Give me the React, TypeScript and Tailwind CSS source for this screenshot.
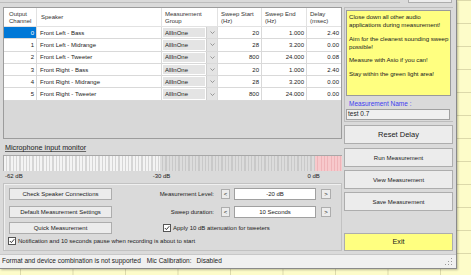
const rows = [
  { ch: 0, sp: "Front Left - Bass", start: "20", end: "1.000", delay: "2.40" },
  { ch: 1, sp: "Front Left - Midrange", start: "28", end: "3.200", delay: "0.00" },
  { ch: 2, sp: "Front Left - Tweeter", start: "800", end: "24.000", delay: "0.08" },
  { ch: 3, sp: "Front Right - Bass", start: "20", end: "1.000", delay: "2.40" },
  { ch: 4, sp: "Front Right - Midrange", start: "28", end: "3.200", delay: "0.00" },
  { ch: 5, sp: "Front Right - Tweeter", start: "800", end: "24.000", delay: "0.00" },
];

function Btn({ children, className = "" }: { children: React.ReactNode; className?: string }) {
  return (
    <div className={"flex items-center justify-center border border-[#adadad] bg-[#ececec] text-[#1a1a1a] " + className}>
      {children}
    </div>
  );
}

function Check({ label }: { label: string }) {
  return (
    <div className="flex items-center gap-[2px]">
      <div className="flex h-[8px] w-[8px] items-center justify-center border border-[#555] bg-white">
        <svg width="6" height="6" viewBox="0 0 6 6">
          <path d="M0.8 3 L2.4 4.6 L5.3 1.2" fill="none" stroke="#222" strokeWidth="0.9" />
        </svg>
      </div>
      <span className="text-[6px] leading-none text-[#222]">{label}</span>
    </div>
  );
}

function Table() {
  return (
    <div className="flex h-[132px] flex-col border border-[#9c9c9c] bg-[#d8d8d8]">
      <div className="flex h-[19px] bg-white text-[6px] leading-[6.5px] text-[#333]">
        <div className="w-[33px] border-r border-b border-[#e2e2e2] px-[5px] pt-[3px]">Output<br />Channel</div>
        <div className="w-[125px] border-r border-b border-[#e2e2e2] px-[4px] pt-[6px]">Speaker</div>
        <div className="w-[56px] border-r border-b border-[#e2e2e2] px-[3px] pt-[3px]">Measurement<br />Group</div>
        <div className="w-[44px] border-r border-b border-[#e2e2e2] px-[3px] pt-[3px]">Sweep Start<br />(Hz)</div>
        <div className="w-[45px] border-r border-b border-[#e2e2e2] px-[3px] pt-[3px]">Sweep End<br />(Hz)</div>
        <div className="w-[34px] border-b border-[#e2e2e2] px-[3px] pt-[3px]">Delay<br />(msec)</div>
      </div>
      {rows.map((r) => (
        <div key={r.ch} className="flex h-[12.3px] bg-white text-[6px] leading-none text-[#222]">
          <div
            className={
              "flex w-[33px] items-center justify-end border-r border-b border-[#d9d9d9] pr-[2px] " +
              (r.ch === 0 ? "bg-[#0078d7] text-white" : "")
            }
          >
            {r.ch}
          </div>
          <div className="flex w-[125px] items-center border-r border-b border-[#d9d9d9] pl-[3px]">{r.sp}</div>
          <div className="flex w-[56px] border-r border-b border-[#d9d9d9] bg-[#e4e4e4]">
            <div className="flex flex-1 items-center border border-white pl-[2px]">AllInOne</div>
            <div className="flex w-[11px] items-center justify-center border-l border-[#cfcfcf]">
              <svg width="5" height="3" viewBox="0 0 5 3">
                <path d="M0.5 0.5 L2.5 2.5 L4.5 0.5" fill="none" stroke="#777" strokeWidth="0.7" />
              </svg>
            </div>
          </div>
          <div className="flex w-[44px] items-center justify-end border-r border-b border-[#d9d9d9] pr-[2px]">{r.start}</div>
          <div className="flex w-[45px] items-center justify-end border-r border-b border-[#d9d9d9] pr-[2px]">{r.end}</div>
          <div className="flex w-[34px] items-center justify-end border-b border-[#d9d9d9] pr-[2px]">{r.delay}</div>
        </div>
      ))}
    </div>
  );
}

function Meter() {
  return (
    <div className="mt-[3px] flex h-[16px] border-t border-l border-[#a8a8a8] bg-[#e8e8e8]">
      <div className="w-[156px] bg-[repeating-linear-gradient(90deg,#f4f4f4_0px,#f4f4f4_2px,#d6d6d6_2px,#d6d6d6_3.3px)]" />
      <div className="w-[155px] bg-[repeating-linear-gradient(90deg,#dcdcdc_0px,#dcdcdc_2px,#c9c9c9_2px,#c9c9c9_3.3px)]" />
      <div className="flex-1 bg-[repeating-linear-gradient(90deg,#f7c9cc_0px,#f7c9cc_2.3px,#efb4b8_2.3px,#efb4b8_3.3px)]" />
    </div>
  );
}

function Stepper({ label, value }: { label: string; value: string }) {
  return (
    <div className="flex h-[12px] items-center">
      <div className="w-[66px] pr-[2px] text-right text-[6px] leading-none text-[#222]">{label}</div>
      <Btn className="ml-[5px] h-[10px] w-[9px] text-[6px] leading-none">&lt;</Btn>
      <div className="ml-[4px] flex h-[12px] w-[82px] items-center justify-center border border-[#a0a0a0] bg-white text-[6px] leading-none text-[#222]">
        {value}
      </div>
      <Btn className="ml-[5px] h-[10px] w-[10px] text-[6px] leading-none">&gt;</Btn>
    </div>
  );
}

export default function App() {
  return (
    <div className="h-[275px] w-[471px] overflow-hidden bg-[#fdfcc9] bg-[linear-gradient(#dcd9aa_1px,transparent_1px),linear-gradient(90deg,#dcd9aa_1px,transparent_1px)] bg-[size:52.5px_23px] bg-[position:20px_0px] font-['Liberation_Sans',Arial,sans-serif]">
      <div className="flex h-[269px] w-[457px] flex-col border-r border-b border-[#8a8a8a] bg-[#dadada] shadow-[1px_1px_2px_rgba(0,0,0,0.25)]">
        {/* top strip */}
        <div className="flex h-[6px]">
          <div className="mt-[1px] h-[2px] w-[400px] border-b border-[#bdbdbd]" />
          <div className="ml-[8px] h-[3px] w-[44px] border-r border-b border-l border-[#adadad] bg-[#ececec]" />
        </div>

        <div className="flex flex-1">
          {/* left column */}
          <div className="ml-[3px] flex w-[339px] flex-col pt-[1px]">
            <Table />
            <div className="mt-[4px] h-[9px] pl-[2px] text-[7.2px] leading-[9px] text-[#222] underline decoration-[#666]">
              Microphone input monitor
            </div>
            <Meter />
            <div className="flex h-[9px] items-center text-[6px] leading-none text-[#222]">
              <span className="ml-[2px]">-62 dB</span>
              <span className="ml-[130px]">-30 dB</span>
              <span className="ml-[137px]">0 dB</span>
            </div>
            <div className="mt-[3px] flex h-[68px] flex-col border border-[#c2c2c2] shadow-[inset_1px_1px_0_#f0f0f0]">
              <div className="flex">
                <div className="ml-[5px] mt-[4px] flex w-[103px] flex-col text-[6px] leading-none">
                  <Btn className="h-[12px]">Check Speaker Connections</Btn>
                  <Btn className="mt-[6px] h-[12px]">Default Measurement Settings</Btn>
                  <Btn className="mt-[4px] h-[12px]">Quick Measurement</Btn>
                </div>
                <div className="ml-[38px] mt-[4px] flex flex-col">
                  <Stepper label="Measurement Level:" value="-20 dB" />
                  <div className="mt-[6px]">
                    <Stepper label="Sweep duration:" value="10 Seconds" />
                  </div>
                  <div className="ml-[13px] mt-[6px]">
                    <Check label="Apply 10 dB attenuation for tweeters" />
                  </div>
                </div>
              </div>
              <div className="ml-[4px] mt-[3px]">
                <Check label="Notification and 10 seconds pause when recording is about to start" />
              </div>
            </div>
          </div>

          {/* right column */}
          <div className="ml-[2px] flex w-[109px] flex-col pt-[1px]">
            <div className="flex h-[115px] flex-col border-l border-t border-b border-[#bdbdbd] pl-[1px] pt-[2px]">
              <div className="h-[86px] w-[105px] border border-[#9a9a9a] bg-[#ffff80] pl-[2px] pr-0 pt-[2px] text-[6.2px] leading-[8px] tracking-[-0.05px] text-[#222]">
                <p>Close down all other audio applications during measurement!</p>
                <p className="mt-[5.5px]">Aim for the cleanest sounding sweep possible!</p>
                <p className="mt-[5.5px]">Measure with Asio if you can!</p>
                <p className="mt-[5.5px]">Stay within the green light area!</p>
              </div>
              <div className="mt-[4px] pl-[3px] text-[6.5px] leading-[7px] text-[#3c3cf0]">Measurement Name :</div>
              <div className="mt-[2px] flex h-[11px] w-[104px] items-center border border-[#a0a0a0] bg-[#f0f0f0] pl-[1px] text-[6.5px] leading-none text-[#222]">
                test 0.7
              </div>
            </div>
            <Btn className="mt-[3px] h-[19px] text-[7.5px] leading-none">Reset Delay</Btn>
            <Btn className="mt-[4px] h-[19px] text-[6px] leading-none">Run Measurement</Btn>
            <Btn className="mt-[3px] h-[19px] text-[6px] leading-none">View Measurement</Btn>
            <Btn className="mt-[3px] h-[19px] text-[6px] leading-none">Save Measurement</Btn>
            <Btn className="mt-[22px] h-[18px] bg-[#ffff80] text-[7.2px] leading-none">Exit</Btn>
          </div>
        </div>

        {/* status bar */}
        <div className="relative flex h-[14px] items-center border-t border-[#c8c8c8] bg-[#f0f0f0] pl-[2px] text-[6.5px] leading-none text-[#222]">
          <span>Format and device combination is not supported</span>
          <span className="ml-[6px]">Mic Calibration:</span>
          <span className="ml-[5px]">Disabled</span>
          <svg className="absolute right-[3px] bottom-[2px]" width="8" height="8" viewBox="0 0 8 8">
            <rect x="6" y="0" width="1" height="1" fill="#999" />
            <rect x="6" y="3" width="1" height="1" fill="#999" />
            <rect x="3" y="3" width="1" height="1" fill="#999" />
            <rect x="6" y="6" width="1" height="1" fill="#999" />
            <rect x="3" y="6" width="1" height="1" fill="#999" />
            <rect x="0" y="6" width="1" height="1" fill="#999" />
          </svg>
        </div>
      </div>
    </div>
  );
}
